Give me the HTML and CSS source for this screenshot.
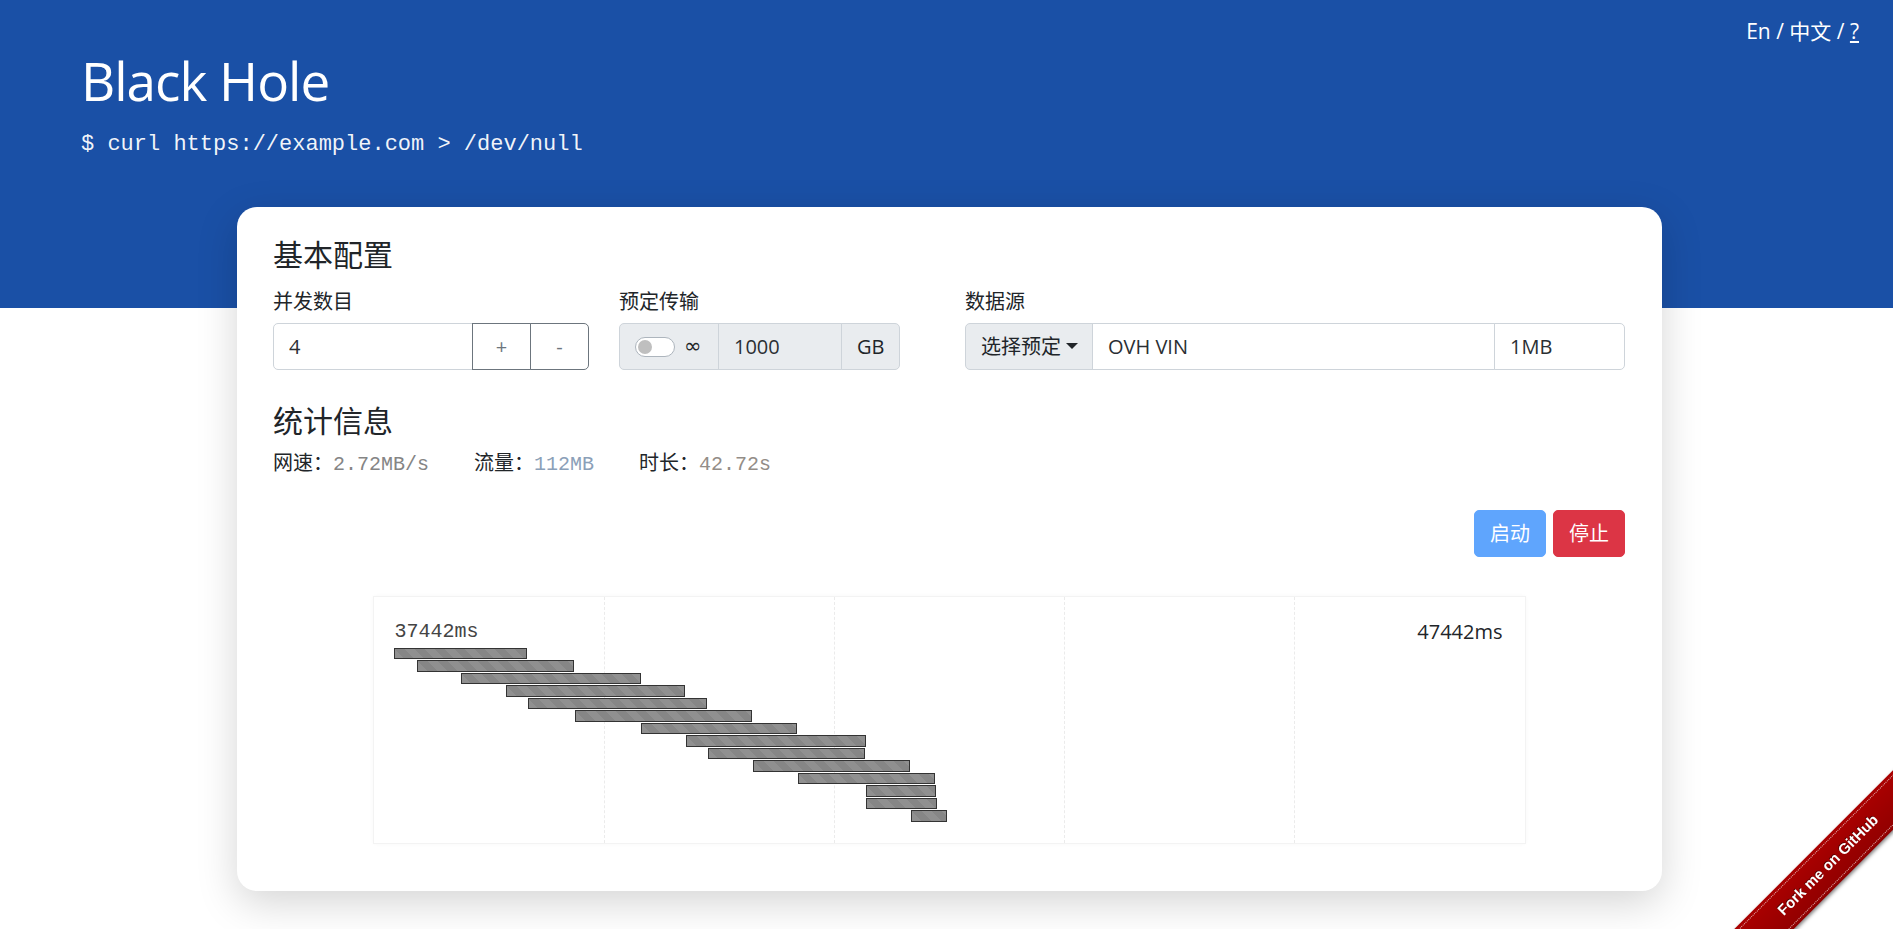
FILE: index.html
```html
<!DOCTYPE html>
<html lang="zh">
<head>
<meta charset="utf-8">
<title>Black Hole</title>
<link rel="stylesheet" href="styles.css">
</head>
<body>
<header class="hero">
  <nav class="lang">En / 中文 / <a class="lang-help" href="#">?</a></nav>
  <h1 class="hero-title">Black Hole</h1>
  <p class="hero-cmd">$ curl https://example.com &gt; /dev/null</p>
</header>

<main class="panel">
  <h2 class="section-title">基本配置</h2>
  <div class="config-row">
    <div class="field">
      <label class="field-label">并发数目</label>
      <div class="input-group">
        <input class="control control-grow" type="text" value="4">
        <button class="btn-step" type="button">+</button>
        <button class="btn-step btn-last" type="button">-</button>
      </div>
    </div>
    <div class="field">
      <label class="field-label">预定传输</label>
      <div class="input-group input-group-fit">
        <span class="addon addon-first addon-switch">
          <span class="switch"><span class="switch-knob"></span></span>
          <span class="infinity">∞</span>
        </span>
        <input class="control control-disabled control-amount" type="text" value="1000" disabled>
        <span class="addon addon-last">GB</span>
      </div>
    </div>
    <div class="field">
      <label class="field-label">数据源</label>
      <div class="input-group">
        <span class="addon addon-first addon-select">选择预定<span class="caret"></span></span>
        <input class="control control-grow" type="text" value="OVH VIN">
        <input class="control control-size control-last" type="text" value="1MB">
      </div>
    </div>
  </div>

  <h2 class="section-title section-stats">统计信息</h2>
  <div class="stats">
    <span class="stat">网速：<span class="stat-value value-speed">2.72MB/s</span></span>
    <span class="stat">流量：<span class="stat-value value-traffic">112MB</span></span>
    <span class="stat">时长：<span class="stat-value value-time">42.72s</span></span>
  </div>

  <div class="actions">
    <button class="btn btn-start" type="button">启动</button>
    <button class="btn btn-stop" type="button">停止</button>
  </div>

  <div class="chart">
    <div class="chart-grid"><div></div><div></div><div></div><div></div><div></div></div>
    <div class="chart-head">
      <span class="chart-start">37442ms</span>
      <span class="chart-end">47442ms</span>
    </div>
    <div class="chart-bars">
      <div class="bar" style="left:20px;top:51px;width:133px;height:11px"></div>
      <div class="bar" style="left:43.5px;top:63px;width:157px;height:12px"></div>
      <div class="bar" style="left:87px;top:76px;width:180px;height:11px"></div>
      <div class="bar" style="left:132px;top:88px;width:179px;height:12px"></div>
      <div class="bar" style="left:154px;top:101px;width:179px;height:11px"></div>
      <div class="bar" style="left:201px;top:113px;width:177px;height:12px"></div>
      <div class="bar" style="left:267px;top:126px;width:156px;height:11px"></div>
      <div class="bar" style="left:312px;top:138px;width:180px;height:12px"></div>
      <div class="bar" style="left:334px;top:151px;width:157px;height:11px"></div>
      <div class="bar" style="left:379.5px;top:163px;width:157px;height:12px"></div>
      <div class="bar" style="left:424.5px;top:176px;width:137px;height:11px"></div>
      <div class="bar" style="left:492.5px;top:188px;width:70px;height:12px"></div>
      <div class="bar" style="left:492.5px;top:201px;width:71px;height:11px"></div>
      <div class="bar" style="left:537px;top:213px;width:36px;height:12px"></div>
    </div>
  </div>
</main>

<a class="ribbon-wrap" href="#"><span class="ribbon"><span class="ribbon-text">Fork me on GitHub</span></span></a>
</body>
</html>
```

FILE: styles.css
```css
* { box-sizing: border-box; }

html, body { margin: 0; padding: 0; }

body {
  font-family: "Open Sans", "Noto Sans CJK SC", sans-serif;
  font-size: 20px;
  line-height: 1.5;
  color: #212529;
  background: #fff;
  overflow: hidden;
  padding-bottom: 38px;
}

/* ---------- header ---------- */
.hero {
  background: #1a50a6;
  color: #fff;
  height: 308px;
  padding: 16px 34px 0 81px;
}

.lang {
  text-align: right;
  height: 30px;
  line-height: 30px;
  font-size: 21px;
}

.lang-help { color: #fff; text-decoration: underline; }

.hero-title {
  margin: 3px 0 0;
  font-size: 53px;
  font-weight: 400;
  line-height: 64px;
  letter-spacing: -1px;
}

.hero-cmd {
  margin: 17px 0 0;
  font-family: "Liberation Mono", monospace;
  font-size: 22px;
  line-height: 30px;
  color: rgba(255, 255, 255, 0.94);
}

/* ---------- panel ---------- */
.panel {
  position: relative;
  width: 1425px;
  margin: -101px 0 0 237px;
  padding: 30px 37px 48px 36px;
  background: #fff;
  border-radius: 20px;
  box-shadow: 0 12px 40px rgba(0, 0, 0, 0.17);
}

.section-title {
  margin: 0 0 14px;
  font-size: 30px;
  font-weight: 400;
  line-height: 36px;
}

.section-stats { margin: 33px 0 9px; }

.config-row {
  display: grid;
  grid-template-columns: 316px 316px 1fr;
  column-gap: 30px;
}

.field-label {
  display: block;
  height: 30px;
  line-height: 30px;
  margin-bottom: 6px;
}

.input-group {
  display: flex;
  height: 47px;
}

.input-group-fit { width: 282px; }

.control {
  height: 47px;
  margin: 0;
  padding: 0 15px;
  border: 1px solid #ced4da;
  background: #fff;
  font: inherit;
  font-size: 20px;
  color: #2b2f33;
  outline: none;
  min-width: 0;
}

.control-grow {
  flex: 1;
  border-radius: 5px 0 0 5px;
}

.addon + .control-grow { border-radius: 0; margin-left: -1px; }

.control-disabled {
  background: #e9ecef;
  color: #2b2f33;
  margin-left: -1px;
}

.control-amount { width: 124px; }

.control-size {
  width: 131px;
  margin-left: -1px;
}

.control-last { border-radius: 0 5px 5px 0; }

.btn-step {
  width: 59px;
  height: 47px;
  margin: 0 0 0 -1px;
  padding: 0;
  border: 1px solid #6c757d;
  background: #fff;
  color: #6c757d;
  font: inherit;
  font-size: 20px;
  line-height: 45px;
}

.btn-last { border-radius: 0 5px 5px 0; }

.addon {
  display: flex;
  align-items: center;
  height: 47px;
  padding: 0 15px;
  border: 1px solid #ced4da;
  background: #e9ecef;
  color: #212529;
  white-space: nowrap;
}

.addon-first { border-radius: 5px 0 0 5px; }

.addon-last {
  margin-left: -1px;
  border-radius: 0 5px 5px 0;
  width: 59px;
  color: #212529;
}

.addon-switch { width: 100px; gap: 9px; }

.switch {
  position: relative;
  display: block;
  flex: none;
  width: 40px;
  height: 20px;
  border: 1px solid #adb5bd;
  border-radius: 10px;
  background: #fff;
}

.switch-knob {
  position: absolute;
  left: 2px;
  top: 2px;
  width: 14px;
  height: 14px;
  border-radius: 50%;
  background: #bfbfbf;
}

.infinity {
  font-family: "DejaVu Sans", sans-serif;
  font-size: 21px;
  color: #212529;
}

.addon-select { width: 128px; }

.caret {
  display: inline-block;
  margin-left: 5px;
  border-top: 6px solid #212529;
  border-left: 6px solid transparent;
  border-right: 6px solid transparent;
  transform: translateY(-1px);
}

/* ---------- stats ---------- */
.stats {
  display: flex;
  gap: 45px;
  height: 30px;
  line-height: 30px;
}

.stat-value {
  font-family: "Liberation Mono", monospace;
  font-size: 20px;
}

.value-speed { color: #858585; }
.value-traffic { color: #8ba0b8; }
.value-time { color: #938d87; }

/* ---------- actions ---------- */
.actions {
  display: flex;
  justify-content: flex-end;
  gap: 7px;
  margin-top: 32px;
}

.btn {
  height: 47px;
  padding: 0 15px;
  border: 1px solid transparent;
  border-radius: 5px;
  color: #fff;
  font: inherit;
  font-size: 20px;
  line-height: 45px;
}

.btn-start { background: #5fa5fd; border-color: #5fa5fd; }
.btn-stop { background: #dc3545; border-color: #dc3545; }

/* ---------- chart ---------- */
.chart {
  position: relative;
  width: 1151px;
  height: 246px;
  margin: 40px auto 0;
  padding: 20px 22px 0 21px;
  background: #fff;
  box-shadow: 0 0 0 1px #f3f3f3, 0 0 5px rgba(0, 0, 0, 0.05);
}

.chart-grid {
  position: absolute;
  inset: 0;
  display: grid;
  grid-template-columns: repeat(5, 1fr);
}

.chart-grid div + div { border-left: 1px dashed #ebebeb; }

.chart-head {
  position: relative;
  display: flex;
  justify-content: space-between;
  height: 30px;
  line-height: 30px;
}

.chart-start {
  font-family: "Liberation Mono", monospace;
  font-size: 20px;
  color: #444;
}

.chart-end { font-size: 20px; color: #212529; }

.chart-bars {
  position: absolute;
  inset: 0;
}

.bar {
  position: absolute;
  border: 1px solid #333;
  background-color: #909090;
  background-image: linear-gradient(45deg,
    rgba(0,0,0,.07) 25%, transparent 25%, transparent 50%,
    rgba(0,0,0,.07) 50%, rgba(0,0,0,.07) 75%, transparent 75%, transparent);
  background-size: 20px 20px;
}

/* ---------- ribbon ---------- */
.ribbon-wrap {
  position: fixed;
  right: 0;
  bottom: 0;
  width: 180px;
  height: 180px;
  overflow: hidden;
  text-decoration: none;
}

.ribbon {
  position: absolute;
  left: -35px;
  top: 95px;
  width: 300px;
  height: 42px;
  padding: 3px 0;
  display: flex;
  transform: rotate(-45deg);
  background: #aa0000 linear-gradient(to bottom, rgba(0,0,0,0), rgba(0,0,0,.15));
  box-shadow: 0 2px 4px rgba(0, 0, 0, 0.5);
}

.ribbon-text {
  flex: 1;
  border-top: 1px dotted rgba(255, 255, 255, 0.7);
  border-bottom: 1px dotted rgba(255, 255, 255, 0.7);
  color: #fff;
  font: 700 15px/34px "Liberation Sans", Arial, sans-serif;
  text-align: center;
  text-shadow: 0 -1px rgba(0, 0, 0, 0.5);
}
```
